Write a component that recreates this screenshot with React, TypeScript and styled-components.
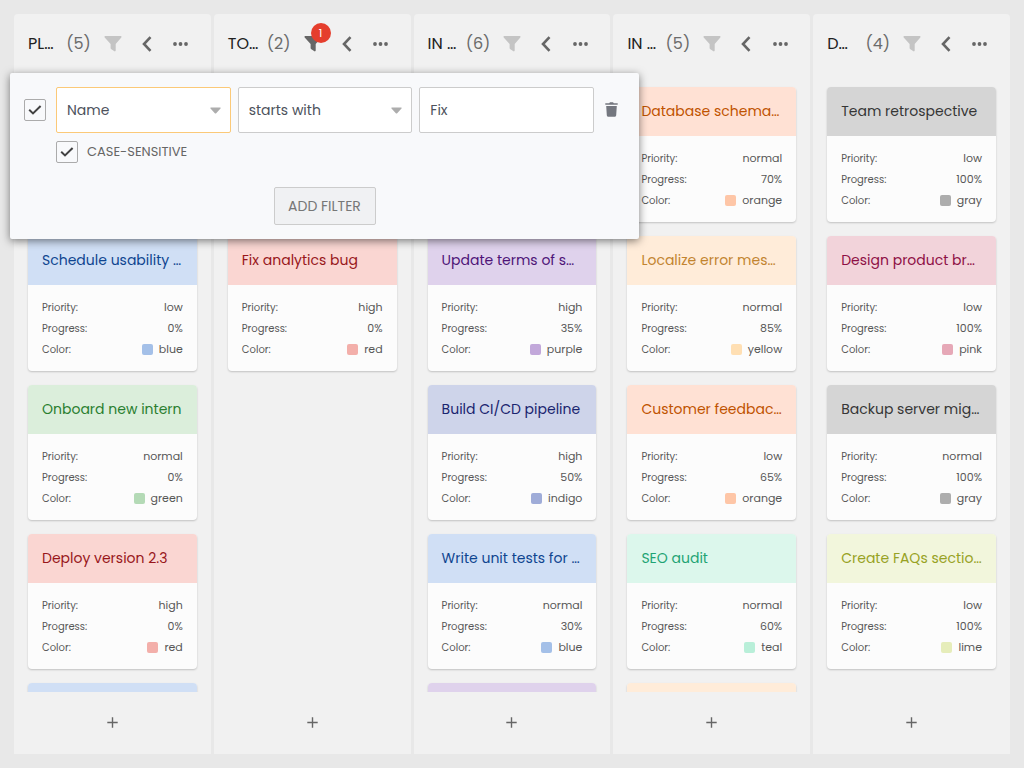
import React from "react";
import styled, { createGlobalStyle } from "styled-components";

type Tone =
  | "blue" | "green" | "red" | "purple" | "indigo"
  | "orange" | "yellow" | "teal" | "gray" | "pink" | "lime";

const tones: Record<Tone, { head: string; text: string; swatch: string }> = {
  blue: { head: "#d0dff5", text: "#0f4590", swatch: "#a4c0e8" },
  green: { head: "#dbeedb", text: "#2a7f30", swatch: "#b4dab6" },
  red: { head: "#fad6d2", text: "#98171b", swatch: "#f3afaa" },
  purple: { head: "#dfd2ec", text: "#4e1478", swatch: "#c2a8da" },
  indigo: { head: "#ced4ea", text: "#1a2570", swatch: "#9facd8" },
  orange: { head: "#ffe1d4", text: "#bf5300", swatch: "#fec6a7" },
  yellow: { head: "#ffecd9", text: "#c28430", swatch: "#ffdfb3" },
  teal: { head: "#dcf7ec", text: "#1fa474", swatch: "#b9efd9" },
  gray: { head: "#d5d5d5", text: "#363636", swatch: "#adadad" },
  pink: { head: "#f2d3da", text: "#8e0f45", swatch: "#e6a8b7" },
  lime: { head: "#f2f6dc", text: "#98a224", swatch: "#e6edba" },
};

interface CardData {
  tone: Tone;
  title?: string;
  priority?: string;
  progress?: string;
}

interface ColumnData {
  title: string;
  count: number;
  filters?: number;
  cards: CardData[];
}

const columns: ColumnData[] = [
  {
    title: "PL…",
    count: 5,
    cards: [
      { tone: "blue" },
      { tone: "blue", title: "Schedule usability …", priority: "low", progress: "0%" },
      { tone: "green", title: "Onboard new intern", priority: "normal", progress: "0%" },
      { tone: "red", title: "Deploy version 2.3", priority: "high", progress: "0%" },
      { tone: "blue" },
    ],
  },
  {
    title: "TO…",
    count: 2,
    filters: 1,
    cards: [
      { tone: "red" },
      { tone: "red", title: "Fix analytics bug", priority: "high", progress: "0%" },
    ],
  },
  {
    title: "IN …",
    count: 6,
    cards: [
      { tone: "purple" },
      { tone: "purple", title: "Update terms of s…", priority: "high", progress: "35%" },
      { tone: "indigo", title: "Build CI/CD pipeline", priority: "high", progress: "50%" },
      { tone: "blue", title: "Write unit tests for …", priority: "normal", progress: "30%" },
      { tone: "purple" },
    ],
  },
  {
    title: "IN …",
    count: 5,
    cards: [
      { tone: "orange", title: "Database schema…", priority: "normal", progress: "70%" },
      { tone: "yellow", title: "Localize error mes…", priority: "normal", progress: "85%" },
      { tone: "orange", title: "Customer feedbac…", priority: "low", progress: "65%" },
      { tone: "teal", title: "SEO audit", priority: "normal", progress: "60%" },
      { tone: "yellow" },
    ],
  },
  {
    title: "D…",
    count: 4,
    cards: [
      { tone: "gray", title: "Team retrospective", priority: "low", progress: "100%" },
      { tone: "pink", title: "Design product br…", priority: "low", progress: "100%" },
      { tone: "gray", title: "Backup server mig…", priority: "normal", progress: "100%" },
      { tone: "lime", title: "Create FAQs sectio…", priority: "low", progress: "100%" },
    ],
  },
];

const GlobalStyle = createGlobalStyle`
  *, *::before, *::after { box-sizing: border-box; }
  body {
    margin: 0;
    background: #e8e8e8;
    color: #575757;
    font-family: Poppins, Inter, "Liberation Sans", sans-serif;
    font-size: 12px;
  }
  button, input, select { font: inherit; color: inherit; margin: 0; }
  button { cursor: pointer; }
`;

const Board = styled.main`
  position: relative;
  display: flex;
  gap: 3px;
  height: 100vh;
  padding: 14px;
`;

const Column = styled.section`
  flex: 1 1 0;
  min-width: 0;
  display: flex;
  flex-direction: column;
  background: #f1f1f1;
  border-radius: 4px 4px 0 0;
`;

const ColumnHeader = styled.header`
  display: flex;
  align-items: center;
  flex: none;
  height: 59px;
  padding: 0 13px 0 14px;
`;

const ColumnTitle = styled.h2`
  flex: 1;
  min-width: 0;
  margin: 0;
  white-space: nowrap;
  color: #212121;
  font-size: 16px;
  font-weight: 400;
  line-height: 24px;
`;

const Count = styled.span`
  margin-right: 5px;
  color: #6b6b6b;
  font-size: 16px;
  line-height: 24px;
`;

const IconButton = styled.button<{ $color?: string }>`
  position: relative;
  display: grid;
  place-items: center;
  flex: none;
  width: 34px;
  height: 34px;
  padding: 0;
  border: 0;
  background: none;
  color: ${(p) => p.$color ?? "#666666"};
`;

const Badge = styled.span`
  position: absolute;
  top: -4px;
  right: -1px;
  width: 20px;
  height: 20px;
  border-radius: 50%;
  background: #e53e2d;
  color: #ffffff;
  font-size: 11px;
  line-height: 20px;
  text-align: center;
`;

const CardList = styled.div`
  flex: 1;
  min-height: 0;
  overflow: hidden;
  display: flex;
  flex-direction: column;
  gap: 14px;
  padding: 14px 14px 0;
`;

const CardBox = styled.article`
  flex: none;
  overflow: hidden;
  background: #fcfcfc;
  border-radius: 4px;
  box-shadow: 0 1px 2px rgba(0, 0, 0, 0.2);
`;

const CardTitle = styled.h3<{ $tone: Tone }>`
  height: 49px;
  margin: 0;
  padding: 0 14px;
  overflow: hidden;
  white-space: nowrap;
  background: ${(p) => tones[p.$tone].head};
  color: ${(p) => tones[p.$tone].text};
  font-size: 14px;
  font-weight: 400;
  line-height: 49px;
`;

const CardBody = styled.dl`
  min-height: 86px;
  margin: 0;
  padding: 12px 14px 11px;
`;

const Field = styled.div`
  display: flex;
  align-items: center;
  justify-content: space-between;
  height: 21px;
  dt { font-size: 10px; }
  dd {
    display: flex;
    align-items: center;
    gap: 6px;
    margin: 0;
    font-size: 11px;
  }
`;

const Swatch = styled.i<{ $tone: Tone }>`
  width: 11px;
  height: 11px;
  border-radius: 2px;
  background: ${(p) => tones[p.$tone].swatch};
`;

const AddCard = styled.button`
  display: grid;
  place-items: center;
  flex: none;
  height: 62px;
  padding: 0 0 2px;
  border: 0;
  background: none;
  color: #666666;
`;

const FilterPanel = styled.form`
  position: absolute;
  top: 73px;
  left: 10px;
  width: 629px;
  padding: 14px;
  background: #f8f9fb;
  border-radius: 2px;
  box-shadow: 0 2px 8px rgba(0, 0, 0, 0.5);
`;

const Box = styled.span`
  position: relative;
  display: grid;
  place-items: center;
  flex: none;
  width: 22px;
  height: 22px;
  color: #424242;
  input {
    position: absolute;
    inset: 0;
    appearance: none;
    width: 22px;
    height: 22px;
    margin: 0;
    border: 1px solid #ababab;
    border-radius: 2px;
  }
`;

const Line = styled.div`
  display: flex;
  align-items: center;
  gap: 10px;
`;

const Fields = styled.div`
  flex: 1;
  display: grid;
  grid-template-columns: repeat(3, 1fr);
  column-gap: 7px;
`;

const SelectWrap = styled.div<{ $active?: boolean }>`
  position: relative;
  select {
    display: block;
    width: 100%;
    height: 46px;
    padding: 0 10px;
    appearance: none;
    outline: none;
    border: 1px solid ${(p) => (p.$active ? "#fbc978" : "#cccccc")};
    border-radius: 2px;
    background: #ffffff;
    color: #4d525c;
    font-size: 14px;
  }
  svg {
    position: absolute;
    right: 10px;
    top: 20px;
    pointer-events: none;
  }
`;

const TextInput = styled.input`
  width: 100%;
  min-width: 0;
  height: 46px;
  padding: 0 10px;
  border: 1px solid #cccccc;
  border-radius: 2px;
  background: #ffffff;
  color: #4d525c;
  font-size: 14px;
`;

const DeleteButton = styled.button`
  display: grid;
  place-items: center;
  width: 14px;
  height: 34px;
  margin-right: 7px;
  padding: 0 0 2px;
  border: 0;
  background: none;
  color: #74777f;
`;

const CaseOption = styled.label`
  display: flex;
  align-items: center;
  gap: 9px;
  width: max-content;
  margin: 8px 0 24px 32px;
  color: #666666;
  font-size: 13px;
  line-height: 22px;
`;

const AddFilter = styled.button`
  display: block;
  width: 102px;
  height: 38px;
  margin: 0 auto;
  padding: 0;
  border: 1px solid #cccccc;
  border-radius: 2px;
  background: #f0f1f3;
  color: #777777;
  font-size: 14px;
`;

const Funnel = () => (
  <svg width="18" height="16" viewBox="0 0 18 16" fill="currentColor" aria-hidden="true">
    <path d="M1.2 0h15.6c.7 0 1 .9.5 1.400L11.700 8v6.600c0 .7-.7 1.100-1.300.7L7 12.900c-.2-.2-.4-.5-.4-.8V8L.7 1.400C.2.9.5 0 1.200 0z" />
  </svg>
);

const Chevron = () => (
  <svg width="10" height="16" viewBox="0 0 10 16" fill="none" stroke="currentColor" strokeWidth="2.600" aria-hidden="true">
    <path d="M8.500 1.200 2 8l6.500 6.800" />
  </svg>
);

const Dots = () => (
  <svg width="15" height="4" viewBox="0 0 15 4" fill="currentColor" aria-hidden="true">
    <circle cx="2" cy="2" r="1.900" />
    <circle cx="7.500" cy="2" r="1.900" />
    <circle cx="13" cy="2" r="1.900" />
  </svg>
);

const Plus = () => (
  <svg width="11" height="11" viewBox="0 0 11 11" stroke="currentColor" strokeWidth="1.400" aria-hidden="true">
    <path d="M5.500 .3v10.400M.3 5.500h10.400" />
  </svg>
);

const Tick = () => (
  <svg width="14" height="10" viewBox="0 0 14 10" fill="none" stroke="currentColor" strokeWidth="2" aria-hidden="true">
    <path d="M1.200 4.800 5 8.400 12.600 1" />
  </svg>
);

const Caret = () => (
  <svg width="11" height="7" viewBox="0 0 11 7" fill="#adadad" aria-hidden="true">
    <path d="M1 .5h9c.6 0 .9.7.5 1.100L6.200 6.200a1 1 0 0 1-1.400 0L.5 1.600C.1 1.200.4.5 1 .5z" />
  </svg>
);

const Trash = () => (
  <svg width="13" height="15" viewBox="0 0 13 15" fill="currentColor" aria-hidden="true">
    <path d="M.3 1.300h3.900L5 .3h3l.8 1h3.900v1.500H.3zM1.200 4h10.600l-.6 9.200c-.1.900-.7 1.500-1.500 1.500H3.300c-.8 0-1.400-.6-1.500-1.500z" />
  </svg>
);

const Check = ({ label }: { label?: string }) => (
  <Box>
    <input type="checkbox" defaultChecked aria-label={label} />
    <Tick />
  </Box>
);

const Card = ({ tone, title, priority, progress }: CardData) => (
  <CardBox>
    <CardTitle $tone={tone}>{title}</CardTitle>
    <CardBody>
      {title && (
        <>
          <Field><dt>Priority:</dt><dd>{priority}</dd></Field>
          <Field><dt>Progress:</dt><dd>{progress}</dd></Field>
          <Field><dt>Color:</dt><dd><Swatch $tone={tone} />{tone}</dd></Field>
        </>
      )}
    </CardBody>
  </CardBox>
);

export default function App() {
  return (
    <>
      <GlobalStyle />
      <Board>
        {columns.map((column, i) => (
          <Column key={i}>
            <ColumnHeader>
              <ColumnTitle>{column.title}</ColumnTitle>
              <Count>{`(${column.count})`}</Count>
              <IconButton type="button" aria-label="Filter" $color={column.filters ? "#666666" : "#c4c4c4"}>
                <Funnel />
                {column.filters && <Badge>{column.filters}</Badge>}
              </IconButton>
              <IconButton type="button" aria-label="Collapse"><Chevron /></IconButton>
              <IconButton type="button" aria-label="More"><Dots /></IconButton>
            </ColumnHeader>
            <CardList>
              {column.cards.map((card, j) => <Card key={j} {...card} />)}
            </CardList>
            <AddCard type="button" aria-label="Add card"><Plus /></AddCard>
          </Column>
        ))}
        <FilterPanel>
          <Line>
            <Check label="Enable filter" />
            <Fields>
              <SelectWrap $active>
                <select aria-label="Field"><option>Name</option></select>
                <Caret />
              </SelectWrap>
              <SelectWrap>
                <select aria-label="Operator"><option>starts with</option></select>
                <Caret />
              </SelectWrap>
              <TextInput aria-label="Value" defaultValue="Fix" />
            </Fields>
            <DeleteButton type="button" aria-label="Delete filter"><Trash /></DeleteButton>
          </Line>
          <CaseOption>
            <Check />
            CASE-SENSITIVE
          </CaseOption>
          <AddFilter type="button">ADD FILTER</AddFilter>
        </FilterPanel>
      </Board>
    </>
  );
}
